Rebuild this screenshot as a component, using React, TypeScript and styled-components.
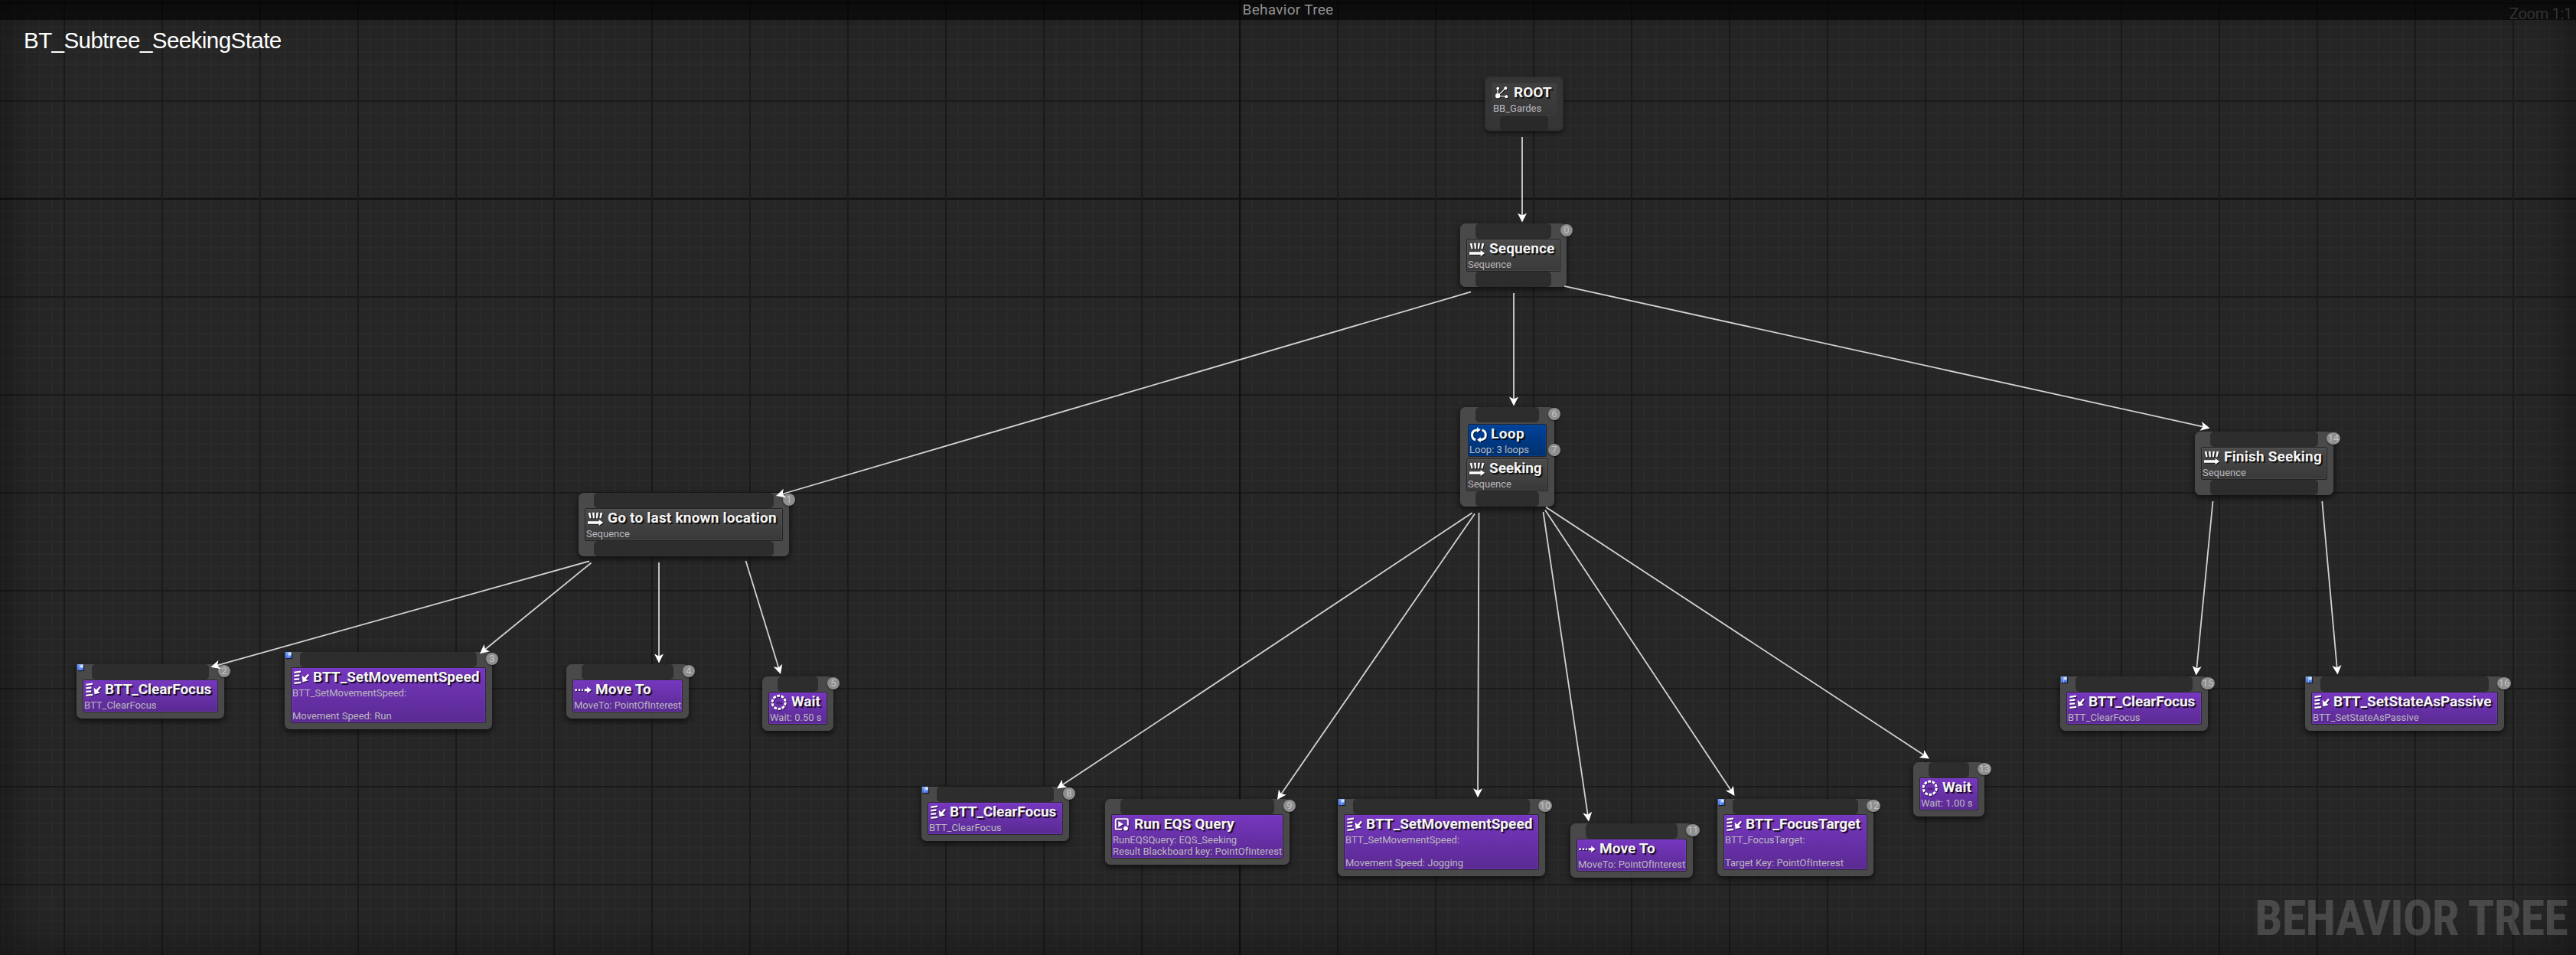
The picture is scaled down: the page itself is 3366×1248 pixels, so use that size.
import React from "react";
import styled, { createGlobalStyle, css } from "styled-components";

type Tone = "gray" | "purple" | "blue" | "root";
type IconName = "root" | "sequence" | "loop" | "task" | "move" | "wait" | "query";

interface Block {
  tone: Tone;
  icon: IconName;
  title: string;
  spacing?: number;
  lines: string[];
  order?: number;
}

interface TreeNode {
  x: number;
  y: number;
  w: number;
  blocks: Block[];
  input?: boolean;
  output?: boolean;
  blueprint?: boolean;
}

const task = (
  x: number,
  y: number,
  w: number,
  order: number,
  icon: IconName,
  title: string,
  lines: string[],
  spacing = 0
): TreeNode => ({
  x,
  y,
  w,
  input: true,
  blueprint: icon === "task",
  blocks: [{ tone: "purple", icon, title, lines, order, spacing }],
});

const composite = (x: number, y: number, w: number, order: number, title: string, spacing = 0): TreeNode => ({
  x,
  y,
  w,
  input: true,
  output: true,
  blocks: [{ tone: "gray", icon: "sequence", title, lines: ["Sequence"], order, spacing }],
});

const NODES: TreeNode[] = [
  {
    x: 1940,
    y: 100,
    w: 103,
    output: true,
    blocks: [{ tone: "root", icon: "root", title: "ROOT", lines: ["BB_Gardes"], spacing: 0 }],
  },
  composite(1908, 292, 139, 0, "Sequence", 0.12),
  composite(756, 644, 275, 1, "Go to last known location", 0.21),
  {
    x: 1908,
    y: 532,
    w: 123,
    input: true,
    output: true,
    blocks: [
      { tone: "blue", icon: "loop", title: "Loop", lines: ["Loop: 3 loops"], order: 6, spacing: 0.4 },
      { tone: "gray", icon: "sequence", title: "Seeking", lines: ["Sequence"], order: 7, spacing: -0.05 },
    ],
  },
  composite(2868, 564, 181, 14, "Finish Seeking", 0.2),
  task(100, 868, 193, 2, "task", "BTT_ClearFocus", ["BTT_ClearFocus"], -0.07),
  task(372, 852, 271, 3, "task", "BTT_SetMovementSpeed", ["BTT_SetMovementSpeed:", "", "Movement Speed: Run"], 0.03),
  task(740, 868, 160, 4, "move", "Move To", ["MoveTo: PointOfInterest"], 0.12),
  task(996, 884, 93, 5, "wait", "Wait", ["Wait: 0.50 s"]),
  task(1204, 1028, 193, 8, "task", "BTT_ClearFocus", ["BTT_ClearFocus"], -0.07),
  task(1444, 1044, 241, 9, "query", "Run EQS Query", ["RunEQSQuery: EQS_Seeking", "Result Blackboard key: PointOfInterest"], 0.12),
  task(1748, 1044, 271, 10, "task", "BTT_SetMovementSpeed", ["BTT_SetMovementSpeed:", "", "Movement Speed: Jogging"], 0.03),
  task(2052, 1076, 160, 11, "move", "Move To", ["MoveTo: PointOfInterest"], 0.12),
  task(2244, 1044, 204, 12, "task", "BTT_FocusTarget", ["BTT_FocusTarget:", "", "Target Key: PointOfInterest"], -0.02),
  task(2500, 996, 93, 13, "wait", "Wait", ["Wait: 1.00 s"]),
  task(2692, 884, 193, 15, "task", "BTT_ClearFocus", ["BTT_ClearFocus"], -0.07),
  task(3012, 884, 260, 16, "task", "BTT_SetStateAsPassive", ["BTT_SetStateAsPassive"]),
];

/* start x, start y, tip x, tip y */
const EDGES: [number, number, number, number][] = [
  [1989, 179, 1989, 290.5],
  [1922, 381.3, 1014, 648],
  [1978, 383, 1978, 530.5],
  [2044, 373.8, 2887.5, 559.5],
  [770, 733.3, 275.5, 871.8],
  [772.5, 735.5, 627, 854.3],
  [861, 735, 861, 866.5],
  [974.5, 733, 1020, 881],
  [1923.5, 670.3, 1381, 1030.5],
  [1927, 671.5, 1669, 1045],
  [1932.5, 670, 1931, 1042.3],
  [2016.5, 669, 2076, 1073.5],
  [2019, 666.5, 2266.5, 1040],
  [2020, 662.7, 2521, 991.5],
  [2891.5, 655, 2869.5, 882.5],
  [3034.3, 655, 3054.5, 881.5],
];

const GlobalStyle = createGlobalStyle`
  body { margin: 0; background: #262626; }
  * { box-sizing: border-box; }
`;

const Canvas = styled.main`
  position: relative;
  width: 3366px;
  height: 1248px;
  overflow: hidden;
  font-family: Roboto, "Liberation Sans", sans-serif;
  background-color: #262626;
  background-image:
    linear-gradient(90deg, #101010 2px, transparent 2px),
    linear-gradient(90deg, #1a1a1a 2px, transparent 2px),
    linear-gradient(180deg, #0e0e0e 2px, transparent 2px),
    linear-gradient(180deg, #1a1a1a 2px, transparent 2px),
    linear-gradient(90deg, #2a2a2a 2px, transparent 2px),
    linear-gradient(180deg, #2a2a2a 2px, transparent 2px);
  background-size: 4000px 100%, 128px 100%, 100% 4000px, 100% 128px, 16px 100%, 100% 16px;
  background-position: 1619px 0, 83px 0, 0 259px, 0 3px, 3px 0, 0 3px;
`;

const Vignette = styled.div`
  position: absolute;
  inset: 0;
  pointer-events: none;
  box-shadow: inset 0 0 64px rgba(0, 0, 0, 0.5);
`;

const TitleBar = styled.header`
  position: relative;
  display: flex;
  justify-content: center;
  height: 26px;
  background: rgba(0, 0, 0, 0.58);
  font-size: 19px;
  line-height: 26px;
  letter-spacing: 0.3px;
  color: #929292;
`;

const AssetName = styled.h1`
  position: relative;
  margin: 0;
  padding: 9px 0 0 31px;
  font: 400 29.5px/36px "Liberation Sans", Arial, sans-serif;
  letter-spacing: -0.55px;
  color: #ffffff;
`;

const ZoomLabel = styled.div`
  position: absolute;
  top: 6px;
  right: 5px;
  font-size: 20px;
  line-height: 24px;
  letter-spacing: -0.3px;
  color: #323232;
`;

const Watermark = styled.div`
  position: absolute;
  right: 11px;
  bottom: 10px;
  font: 700 64.5px/76px "Roboto Condensed", Roboto, sans-serif;
  letter-spacing: -0.9px;
  color: rgba(255, 255, 255, 0.17);
`;

const EdgeLayer = styled.svg`
  position: absolute;
  inset: 0;
  width: 3366px;
  height: 1248px;
  pointer-events: none;
`;

const NodeFrame = styled.article<{ $x: number; $y: number; $w: number; $root?: boolean; $square?: boolean }>`
  position: absolute;
  left: ${(p) => p.$x}px;
  top: ${(p) => p.$y}px;
  width: ${(p) => p.$w}px;
  display: flex;
  flex-direction: column;
  padding: ${(p) => (p.$root ? "8px 0 0" : "0")};
  border-radius: 7px;
  border-top-left-radius: ${(p) => (p.$square ? 0 : 7)}px;
  background: rgba(76, 76, 76, 0.93);
  box-shadow: 0 3px 7px 1px rgba(0, 0, 0, 0.55);
  ${(p) =>
    p.$root &&
    css`
      background: rgba(56, 56, 56, 0.88);
      box-shadow: inset 0 0 0 2px #303030, 0 3px 6px rgba(0, 0, 0, 0.5);
    `}
`;

const Pin = styled.div<{ $root?: boolean }>`
  height: 19.5px;
  margin: 0 20px 0.5px;
  border-radius: 5px;
  background: ${(p) => (p.$root ? "#292929" : "#2d2d2d")};
`;

const Foot = styled.div`
  height: 8px;
`;

const tones: Record<Tone, ReturnType<typeof css>> = {
  gray: css`
    border: 1px solid #232323;
    background: linear-gradient(#4b4b4b, #393939);
    box-shadow: inset 0 0 0 1px rgba(255, 255, 255, 0.06);
  `,
  purple: css`
    border: 1px solid #2a2630;
    background: linear-gradient(#7637bf, #5a2a92);
    box-shadow: inset 0 0 0 1px rgba(135, 70, 220, 0.4);
  `,
  blue: css`
    border: 1px solid #1e2530;
    background: linear-gradient(#00429b, #00316e);
    box-shadow: inset 0 0 0 1px rgba(10, 80, 180, 0.4);
  `,
  root: css`
    border: 1px solid transparent;
    background: linear-gradient(#404040, #373737);
  `,
};

const Card = styled.section<{ $tone: Tone }>`
  position: relative;
  display: flex;
  flex-direction: column;
  margin: ${(p) => (p.$tone === "blue" ? "2px 10px" : p.$tone === "root" ? "0 9px" : "0 8px")};
  padding: 0 0 1px 1px;
  border-radius: 2px;
  ${(p) => tones[p.$tone]}
`;

const Heading = styled.div<{ $tight: boolean }>`
  display: flex;
  align-items: flex-start;
  gap: ${(p) => (p.$tight ? 4 : 5)}px;
  height: 25px;
  padding-left: 1px;
`;

const Title = styled.h2<{ $spacing: number }>`
  margin: 0;
  font-size: 19px;
  line-height: 23px;
  font-weight: 700;
  letter-spacing: ${(p) => p.$spacing}px;
  white-space: nowrap;
  color: #f4f4f4;
  text-shadow: 2px 2px 1px rgba(0, 0, 0, 0.8);
`;

const Detail = styled.p`
  margin: 0;
  height: 15px;
  font-size: 13px;
  line-height: 15px;
  white-space: nowrap;
  color: #bbb8be;
`;

const Order = styled.span<{ $wide: boolean; $offset: number; $top: number }>`
  position: absolute;
  top: ${(p) => p.$top}px;
  right: ${(p) => -p.$offset - (p.$wide ? 9 : 8)}px;
  display: flex;
  align-items: center;
  justify-content: center;
  width: ${(p) => (p.$wide ? 18 : 16)}px;
  height: 16px;
  border-radius: 50%;
  background: #8f8f8f;
  color: #c2c2c2;
  font-size: 13px;
  line-height: 16px;
  box-shadow: 0 1px 2px rgba(0, 0, 0, 0.6);
`;

const BlueprintMark = styled.span`
  position: absolute;
  left: 1px;
  top: 0;
  width: 8px;
  height: 8px;
  background:
    radial-gradient(circle at 72% 32%, #ffffff 0, #bcd4ff 18%, transparent 38%),
    linear-gradient(90deg, transparent 3px, #8fb2ff 3px, #8fb2ff 4px, transparent 4px),
    linear-gradient(#79a4f8, #3f6fe6);
  box-shadow: 1px 1px 1px rgba(0, 0, 0, 0.6);
`;

const IconBox = styled.svg`
  flex: none;
  width: 22px;
  height: 22px;
  margin-top: 1px;
  overflow: visible;
  color: #ffffff;
  filter: drop-shadow(1.5px 1.5px 0.5px rgba(0, 0, 0, 0.6));
`;

const ICONS: Record<IconName, React.ReactNode> = {
  root: (
    <g fill="currentColor" stroke="currentColor" strokeWidth="1.1">
      <path d="M5 6v9.5L15.2 5.3M5 15.5l11.3.8" fill="none" />
      <circle cx="5.2" cy="15.2" r="2.6" />
      <circle cx="5.2" cy="5.6" r="1.3" />
      <circle cx="15.3" cy="5.2" r="1.5" />
      <circle cx="16.3" cy="16.2" r="1.5" />
    </g>
  ),
  sequence: (
    <g fill="currentColor">
      <path d="M1.7 4.2l2.7-.5 1.2 7.200-1.900.6zM6.900 3.700h2.700l.4 7.500H8.100zM12.300 3.700H15l-1.200 7.500h-1.900zM17.500 3.700l2.800.5-2 7.300-1.900-.6z" />
      <path d="M1 15.200h14.600V13l5.600 4-5.600 4v-2.300H1z" />
    </g>
  ),
  loop: (
    <g fill="none" stroke="currentColor" strokeWidth="3">
      <path d="M7.200 19C3.800 18 2.500 15.200 2.500 12.300 2.500 8.400 5 5.900 10 5.900" />
      <path d="M15.600 5.900C19 6.900 20.300 9.500 20.300 12.500c0 3.900-2.500 6.300-7.500 6.300" />
      <path d="M9 2.300l4.800 3.500L9 9.300zM13.800 15.200L9 18.800l4.800 3.400z" fill="currentColor" stroke="none" />
    </g>
  ),
  task: (
    <g fill="none" stroke="currentColor">
      <path d="M1.400 4.800l8.600-1.200M1.400 9.300l7-.8M1.400 13.900l6.800-.6M1.400 18.800l8.800-.9" strokeWidth="2.300" />
      <path d="M20 7.500l-5 5.800" strokeWidth="2.600" />
      <path d="M11.700 8.800l.9 8.400 7.200-1.800z" fill="currentColor" stroke="none" />
    </g>
  ),
  move: (
    <g fill="currentColor">
      <path d="M.4 10.600h2.500v2.500H.4zM4.900 10.600h2.300v2.500H4.900zM9 10.600h1.700v2.500H9z" />
      <path d="M12.700 10.300h3.500V7.600l5.600 4.200-5.600 4.200v-2.700h-3.500z" />
    </g>
  ),
  wait: (
    <g fill="none">
      <path d="M7 12.500h8" stroke="#000" strokeOpacity=".35" strokeWidth="1.500" />
      <circle cx="10.700" cy="11.800" r="8.600" stroke="currentColor" strokeWidth="3" strokeDasharray="3.800 1.603" />
    </g>
  ),
  query: (
    <g fill="none" stroke="currentColor" strokeWidth="2">
      <path d="M11 17.700H4.300a1.500 1.500 0 0 1-1.500-1.500V5.700a1.500 1.500 0 0 1 1.500-1.500h13a1.500 1.500 0 0 1 1.500 1.500v7" />
      <path d="M6.300 7v8.200l6.500-4.100z" fill="currentColor" stroke="none" />
      <circle cx="16" cy="16.600" r="2.900" fill="currentColor" stroke="none" />
    </g>
  ),
};

function Icon({ name }: { name: IconName }) {
  return <IconBox viewBox="0 0 22 22">{ICONS[name]}</IconBox>;
}

function Edge({ points: [x1, y1, x2, y2] }: { points: [number, number, number, number] }) {
  const angle = (Math.atan2(y2 - y1, x2 - x1) * 180) / Math.PI;
  const length = Math.hypot(x2 - x1, y2 - y1);
  return (
    <g transform={`translate(${x2} ${y2}) rotate(${angle})`}>
      <line x1={-length} y1="0" x2="-8" y2="0" stroke="#d2d2d2" strokeWidth="1.8" />
      <path d="M0 0L-12 -6L-9 0L-12 6Z" fill="#ffffff" />
    </g>
  );
}

function GraphNode({ node }: { node: TreeNode }) {
  const root = !node.input;
  return (
    <NodeFrame $x={node.x} $y={node.y} $w={node.w} $root={root} $square={node.blueprint}>
      {node.input && <Pin />}
      {node.blocks.map((b) => (
        <Card key={b.title} $tone={b.tone}>
          <Heading $tight={b.icon === "task" || b.icon === "root"}>
            <Icon name={b.icon} />
            <Title $spacing={b.spacing ?? 0}>{b.title}</Title>
          </Heading>
          {b.lines.map((line, i) => (
            <Detail key={i}>{line}</Detail>
          ))}
          {b.order !== undefined && (
            <Order $wide={b.order > 9} $offset={b.tone === "blue" ? 11 : 9} $top={b.tone === "blue" ? -22 : -20}>
              {b.order}
            </Order>
          )}
        </Card>
      ))}
      {node.output ? <Pin $root={root} /> : <Foot />}
      {node.blueprint && <BlueprintMark />}
    </NodeFrame>
  );
}

export default function App() {
  return (
    <Canvas>
      <GlobalStyle />
      <Vignette />
      <TitleBar>Behavior Tree</TitleBar>
      <AssetName>BT_Subtree_SeekingState</AssetName>
      <ZoomLabel>Zoom 1:1</ZoomLabel>
      <Watermark>BEHAVIOR TREE</Watermark>
      {NODES.map((n) => (
        <GraphNode key={`${n.x}-${n.y}`} node={n} />
      ))}
      <EdgeLayer viewBox="0 0 3366 1248">
        {EDGES.map((e) => (
          <Edge key={e.join()} points={e} />
        ))}
      </EdgeLayer>
    </Canvas>
  );
}
